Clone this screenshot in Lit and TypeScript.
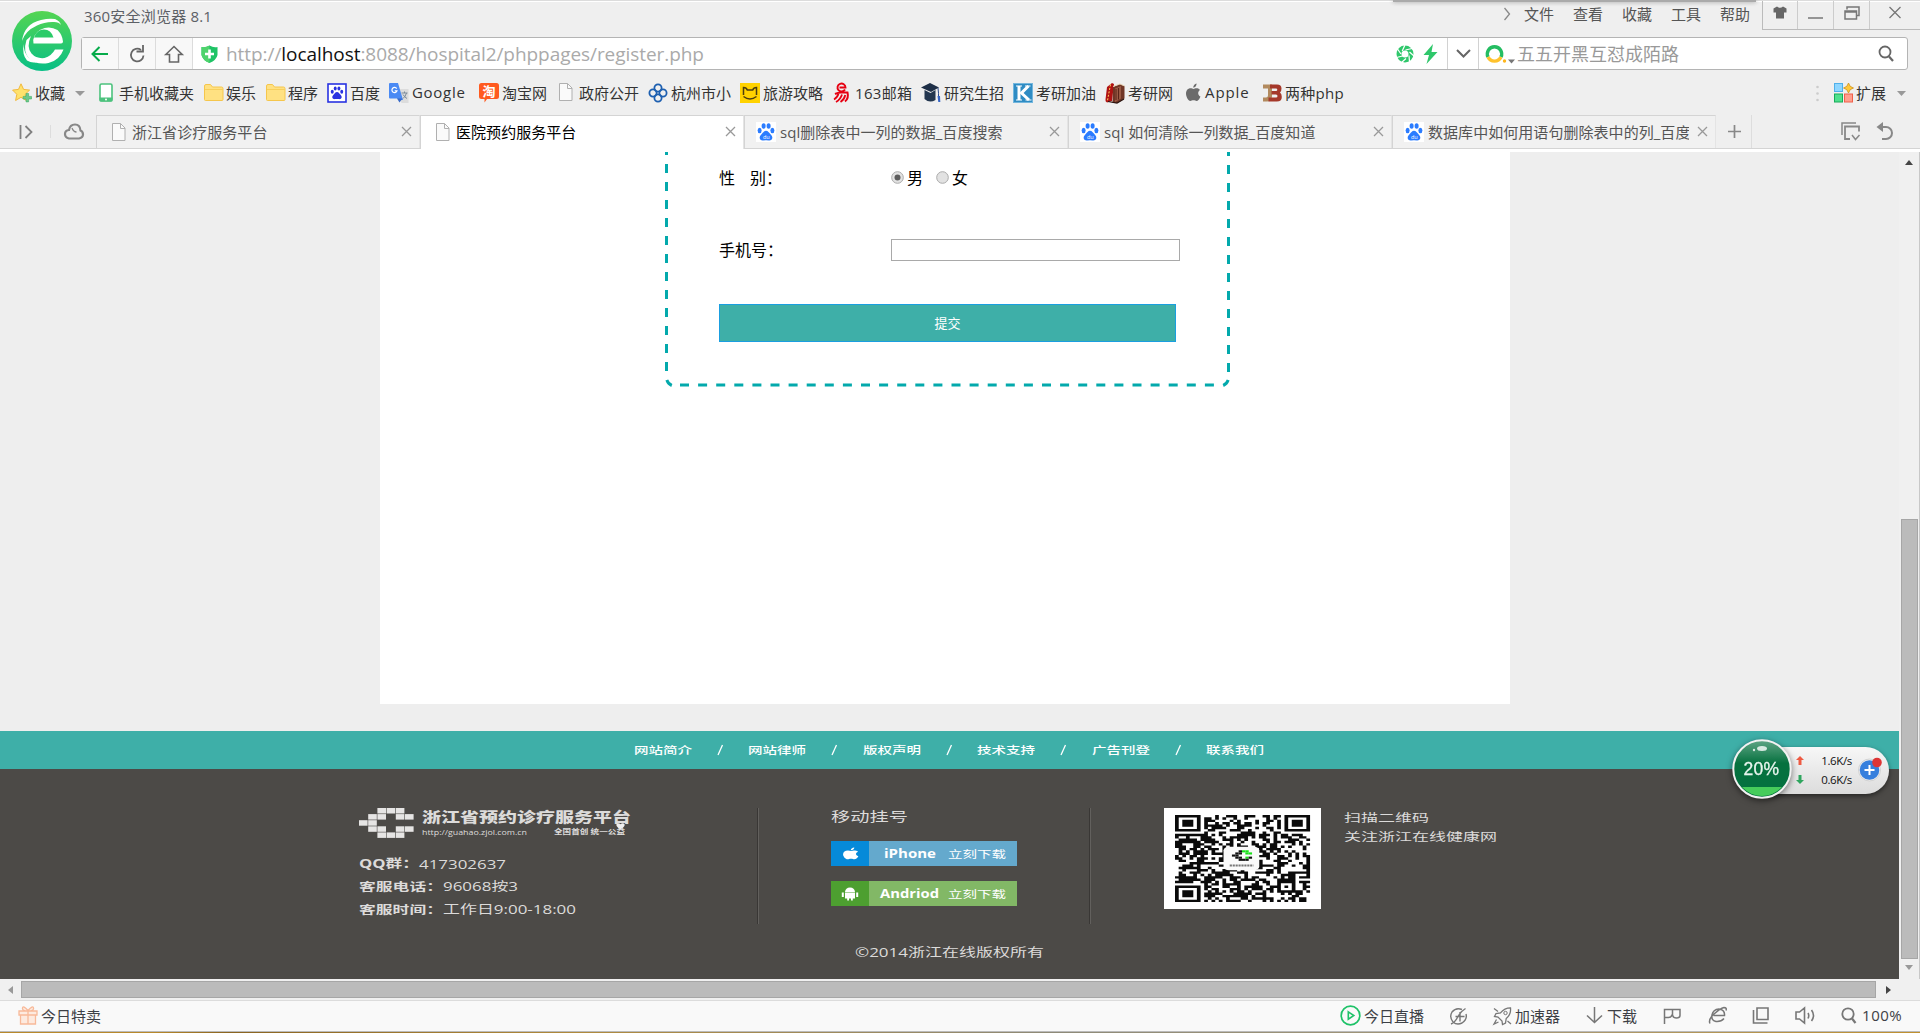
import { LitElement, html, svg, css, nothing } from "lit";
import { customElement } from "lit/decorators.js";

const page = svg`<path d="M1.5 .5h8l4.500 4.500v12.500h-12.500z" fill="#fafafa" stroke="#b0b0b0"/><path d="M9.500 .5v5h4.500" fill="none" stroke="#b0b0b0"/>`;
const folder = svg`<path d="M.5 3q0-1.500 1.500-1.500h4.500l2 2.500h9q1.500 0 1.500 1.500v11q0 1-1 1h-16.500q-1 0-1-1z" fill="#ffe182" stroke="#f5c64c"/><path d="M1 6.500h18" stroke="#f7cf5c"/>`;
const paw = (c: string) => svg`<g fill="${c}"><ellipse cx="3.600" cy="8.500" rx="2" ry="2.700"/><ellipse cx="7.600" cy="4" rx="2" ry="2.800"/><ellipse cx="12.600" cy="4" rx="2" ry="2.800"/><ellipse cx="16.400" cy="8.500" rx="2" ry="2.700"/><path d="M10 8.800c2 0 3 2 4.500 3.400c3.500 3.400 1.500 6.600-1.700 6.200q-2.800-.5-5.600 0c-3.200.4-5.200-2.800-1.700-6.200c1.500-1.400 2.500-3.400 4.500-3.400z"/></g>`;
const apple = (c: string) => svg`<path d="M12.200 5.200c-1 0-1.800.7-2.600.7s-1.800-.7-3-.7c-2.700 0-4.600 2.200-4.600 5.400c0 3.400 2.300 7.400 4.300 7.400c1.100 0 1.700-.7 3.200-.7s2 .7 3.100.7c1.700 0 3.300-3 3.800-4.600c-2.800-1.300-2.900-5.200-.3-6.500c-1-1.300-2.500-1.700-3.900-1.700z" fill="${c}"/><path d="M12.600.6c.1 2.300-1.500 4-3.300 4.100c-.2-2 1.300-3.900 3.300-4.100z" fill="${c}"/>`;

const icons: Record<string, unknown> = {
  star: svg`<path d="M9 .8l2.600 5.600 6 .7-4.500 4.200 1.300 6.200-5.400-3.200-5.400 3.200 1.200-6.200L.6 7.100l5.900-.7z" fill="#ffe26c" stroke="#f2b93c"/><path d="M14 10.500h2.600v2.900h2.900v2.600h-2.900v2.900h-2.600v-2.900h-2.900v-2.600h2.900z" fill="#6ec98b" stroke="#3fae66" stroke-width=".6"/>`,
  phone: svg`<rect x="1" y="1" width="12" height="17" rx="1.500" fill="#fff" stroke="#4cc27d" stroke-width="1.600"/><path d="M.5 14.500h13v3q0 1-1 1h-11q-1 0-1-1z" fill="#4cc27d"/><circle cx="7" cy="16.500" r="1" fill="#fff"/>`,
  folder,
  baidu: svg`<rect x="1" y="1" width="18" height="18" fill="#fff" stroke="#2932e1" stroke-width="1.600"/><g transform="translate(2.600 2.500) scale(.74)">${paw("#2932e1")}</g>`,
  google: svg`<path d="M9 6h10.500v14h-7z" fill="#dcdcdc"/><path d="M1 0h8l5 17h-4l-2-1.500h-7q-1 0-1-1v-13.500q0-1 1-1z" fill="#4a8af4"/><path d="M8 15.500h5.500l-3 4z" fill="#3a6bc8"/><path d="M7.700 5.600a2.600 2.600 0 1 0 .3 2.300h-2.300" fill="none" stroke="#fff" stroke-width="1.200"/><path d="M12.500 10h6M15.500 8.500v1.500M17.500 10q-1 3.500-3.500 5.500M14 11.500q1.500 2.500 4 4" fill="none" stroke="#7b8a99"/>`,
  tao: svg`<path d="M2.500 0h15q2.500 0 2.500 2.500v11q0 2.500-2.500 2.500h-9.500l-2.500 3.500v-3.500h-3q-2.500 0-2.500-2.500v-11q0-2.500 2.500-2.500z" fill="#ff5a1f"/><text x="3.500" y="13" font-size="13" font-weight="700" fill="#fff" font-family="Noto Sans CJK SC">淘</text>`,
  page,
  unicom: svg`<g fill="none" stroke="#1d5fb0" stroke-width="1.800"><circle cx="10" cy="5" r="3.600"/><circle cx="5" cy="10" r="3.600"/><circle cx="15" cy="10" r="3.600"/><circle cx="10" cy="15" r="3.600"/></g>`,
  trip: svg`<rect width="20" height="20" fill="#ffd200"/><path d="M3.500 12v-7.500q3 0 3.800 2.500h5.400q.8-2.500 3.800-2.500v7.500M3.500 13.500q6.500 5 13 0" fill="none" stroke="#4a3d10" stroke-width="1.500"/>`,
  mail: svg`<g fill="none" stroke="#e60012"><path d="M11 6.500a4 4 0 1 1 .5-2h-6" stroke-width="1.900"/><path d="M1 11q3-1.500 6-1.500h6.500q1.500 6-2.500 9" stroke-width="2"/><path d="M4.500 10.500q-1 4-4.500 6M8 11.500q-1.500 5-6 7.500M11.300 12q-1 4.500-4.800 7" stroke-width="1.800"/></g>`,
  cap: svg`<path d="M0 4.500l9-4.500 9 4.500-8 4.500z" fill="#1e2f47"/><path d="M3.500 7v9q5 4.500 11 1v-10l-5 3z" fill="#22364f"/><path d="M17 5q.8 6 .5 9" fill="none" stroke="#2b4a8a"/><path d="M16.500 13h2.500l.3 6h-2z" fill="#3564c4"/>`,
  kay: svg`<rect x=".5" y=".5" width="19" height="19" fill="#2f8cc4" stroke="#73b6dd"/><path d="M3 3h6M3 17h6M12 3h5.500M12.500 17h6" stroke="#fff" stroke-width="1.200"/><path d="M4.500 3h3v14h-3z" fill="#fff"/><path d="M15.500 3l-7 7 7.500 7" fill="none" stroke="#fff" stroke-width="3"/>`,
  book: svg`<path d="M2 4l5-4 2 1-2 17-5 1.500q-2-1-1.500-3z" fill="#b01212"/><path d="M8 4l7-3 4.500 2v12.500l-7 4.500h-5z" fill="#713626"/><path d="M10 5.500l6-2.500v12.500l-6 3.500z" fill="#9a5a44"/><path d="M11 6v11M13.500 5v11.500" stroke="#5a2418"/><path d="M5.500 1.500l-3 16" stroke="#ffcf5a" stroke-dasharray="2 1.500"/><path d="M8 3.500l7-2.500 4.500 2" fill="none" stroke="#e9d7b8"/><path d="M3 18.500l9 1.500 7-4" fill="none" stroke="#2b1510" stroke-width="1.200"/>`,
  apple: apple("#6b6b6b"),
  jb: svg`<path d="M1 1.500h9v12q0 5-5 5h-4v-4h3q2 0 2-2v-7h-5z" fill="#b28a5e"/><path d="M8 1.500h7q4.500 0 4.500 4 0 3-1.500 4 1.800 1 1.800 4.500 0 4.500-5 4.500h-8.300v-4h7.500q1.500 0 1.500-1.500t-1.500-1.500h-4.500v-3.500h4.500q1.300 0 1.300-1.300t-1.300-1.300h-6z" fill="#a5382a"/>`,
  pawtab: svg`<rect width="20" height="20" fill="#fff"/>${paw("#2b7cff")}<text x="7" y="16.500" font-size="5.500" fill="#fff" font-family="Open Sans">du</text>`,
};

const icon = (name: string, w = 20, h = 20, cls = "") =>
  html`<svg class="ic ${cls}" width="${w}" height="${h}" viewBox="0 0 ${w} ${h}">${icons[name]}</svg>`;
const draw = (w: number, h: number, body: unknown, cls = "") =>
  html`<svg class="ic ${cls}" width="${w}" height="${h}" viewBox="0 0 ${w} ${h}" fill="none">${body}</svg>`;
/** Horizontally stretched line of text, as the footer uses throughout. */
const wide = (text: string, w: number, size: number, h: number, cls = "") =>
  html`<svg class="wide ${cls}" width="${w}" height="${h}"><text x="0" y="${h / 2 + size * 0.37}" font-size="${size}" textLength="${w}" lengthAdjust="spacingAndGlyphs">${text}</text></svg>`;

// label, icon, icon width, total width up to the next entry, gap before the label, letter spacing
const bookmarks: [string, string, number, number, number, number][] = [
  ["收藏", "star", 20, 87, 3, 0],
  ["手机收藏夹", "phone", 14, 105, 6, 0],
  ["娱乐", "folder", 20, 62, 2, 0],
  ["程序", "folder", 20, 61, 2, 0],
  ["百度", "baidu", 20, 62, 3, 0],
  ["Google", "google", 20, 90, 3, 0.7],
  ["淘宝网", "tao", 20, 79, 3, 0],
  ["政府公开", "page", 15, 90, 6, 0],
  ["杭州市小", "unicom", 20, 92, 3, 0],
  ["旅游攻略", "trip", 20, 94, 3, 0],
  ["163邮箱", "mail", 16, 87, 5, 0.3],
  ["研究生招", "cap", 20, 92, 3, 0],
  ["考研加油", "kay", 20, 92, 3, 0],
  ["考研网", "book", 20, 79, 3, 0],
  ["Apple", "apple", 17, 78, 4, 0.9],
  ["两种php", "jb", 20, 90, 3, 0.3],
];

const tabs: [string, string, boolean][] = [
  ["浙江省诊疗服务平台", "page", false],
  ["医院预约服务平台", "page", true],
  ["sql删除表中一列的数据_百度搜索", "pawtab", false],
  ["sql 如何清除一列数据_百度知道", "pawtab", false],
  ["数据库中如何用语句删除表中的列_百度", "pawtab", false],
];

const logoCells = ["  ###", " ## ##", "##", " ## ##", "  ###"];
const cells = (sx: number, sy: number, gap: number, accent?: string) =>
  logoCells.flatMap((row, y) =>
    [...row].map((c, x) => (c === "#" ? svg`<rect x="${x * sx}" y="${y * sy}" width="${sx - gap}" height="${sy - gap}" fill="${accent && ((y < 2 && x > 2) || (y === 3 && x === 4)) ? accent : "inherit"}"/>` : nothing))
  );

function qrPath(): string {
  const n = 37;
  const ring = (x: number, y: number, cx: number, cy: number) => Math.max(Math.abs(x - cx), Math.abs(y - cy));
  let seed = 90417;
  let d = "";
  for (let y = 0; y < n; y++) {
    for (let x = 0; x < n; x++) {
      seed = (seed * 1103515245 + 12345) % 2147483648;
      let on = (seed >> 12) % 100 < 54;
      for (const [cx, cy] of [[3, 3], [33, 3], [3, 33]]) {
        const r = ring(x, y, cx, cy);
        if (r <= 4) on = r !== 4 && r !== 2;
      }
      const a = ring(x, y, 30, 30);
      if (a <= 2) on = a !== 1;
      if (on) d += `M${x} ${y}h1.02v1.02h-1.02z`;
    }
  }
  return d;
}

@customElement("app-root")
export class AppRoot extends LitElement {
  static styles = css`
    :host { display: flex; flex-direction: column; width: 1920px; height: 1033px; overflow: hidden; position: relative; background: #efefef; box-sizing: border-box; font-family: "Open Sans", "Noto Sans CJK SC", sans-serif; font-size: 15px; color: #333; }
    * { box-sizing: border-box; }
    .ic { display: block; flex: none; overflow: visible; }
    .wide { display: block; flex: none; overflow: visible; font-family: "Open Sans", "Noto Sans CJK SC", sans-serif; fill: #dcdbda; }
    .wide.nav { fill: #fff; font-weight: 500; }
    .wide.b { font-weight: 700; }
    .wide.h { font-weight: 900; }
    .wide.w { fill: #fff; }
    span { white-space: nowrap; }

    .head { flex: none; height: 115px; border-top: 1px solid #dcdcdc; box-shadow: inset 0 1px #fff; display: grid; grid-template-columns: 81px 1fr; grid-template-rows: 36px 33px 45px; }
    .logo { grid-row: 1 / 3; padding: 10px 0 0 12px; }
    .title { display: flex; justify-content: space-between; padding-left: 3px; height: 34px; }
    .title .name { line-height: 30px; color: #5c6066; letter-spacing: .2px; }
    .menu { display: flex; line-height: 27px; color: #555; }
    .menu span { margin-right: 19px; }
    .menu > .ic { margin: 6px 12px 0 0; }
    .menu .last { margin-right: 12px; }
    .winbtns { display: flex; height: 29px; border: 1px solid #bbb; border-top: 0; border-right: 0; }
    .winbtns div { display: flex; align-items: center; justify-content: center; width: 36px; border-left: 1px solid #ccc; padding-bottom: 5px; }
    .winbtns div:first-child { border: 0; width: 34px; }
    .winbtns div:last-child { width: 51px; }
    .shade { position: absolute; left: 1393px; top: 0; width: 363px; height: 2px; background: #aaa; box-shadow: 0 0 4px #888; }

    .bar { display: flex; width: 1827px; height: 33px; border: 1px solid #b4b4b4; border-radius: 3px; background: #fff; }
    .btn { display: flex; align-items: center; justify-content: center; width: 37px; border-right: 1px solid #dcdcdc; background: #f8f8f8; }
    .url { display: flex; align-items: center; flex: 1; padding-left: 8px; gap: 8px; font-size: 19px; color: #aaa; letter-spacing: -.06px; }
    .url b { color: #111; font-weight: 400; }
    .quick { display: flex; align-items: center; gap: 9px; width: 51px; }
    .drop { display: flex; align-items: center; justify-content: center; width: 32px; border-left: 1px solid #d2d2d2; border-right: 1px solid #d2d2d2; }
    .search { display: flex; align-items: center; width: 428px; padding: 0 13px 0 6px; font-size: 18px; color: #999; }
    .search span { flex: 1; padding: 0 0 1px 1px; }

    .marks { grid-column: 1 / 3; display: flex; align-items: center; padding: 0 0 0 12px; height: 46px; }
    .mark { display: flex; align-items: center; color: #333; flex: none; }
    .mark span, .ext span { padding-bottom: 2px; }
    .mark .tri { margin-left: 10px; }
    .ext { display: flex; align-items: center; margin-left: auto; width: 104px; }
    .ext span { margin: 0 11px 0 2px; }

    .tabs { flex: none; height: 34px; display: flex; border-bottom: 1px solid #d4d4d4; }
    .side { display: flex; align-items: center; width: 96px; padding-left: 19px; }
    .side i { width: 1px; height: 13px; background: #ddd; margin: 0 13px 0 16px; }
    .tab { display: flex; align-items: center; width: 324px; height: 33px; border: 1px solid #d4d4d4; border-bottom: 0; border-right: 1px solid #e4e4e4; background: #f1f1f1; padding: 0 7px 1px 14px; color: #555; }
    .tab.p { padding-left: 11px; }
    .tab.on { background: #fff; color: #000; height: 34px; padding-bottom: 2px; }
    .tab span { flex: 1; overflow: hidden; margin-left: 4px; letter-spacing: .05px; }
    .tab.page span { margin-left: 6px; }
    .tab .x { margin-left: 8px; }
    .newtab { display: flex; align-items: center; justify-content: center; width: 36px; border-right: 1px solid #ddd; padding-left: 2px; }
    .tools { display: flex; align-items: center; margin-left: auto; gap: 16px; padding-right: 26px; }

    .view { flex: none; height: 830px; border-top: 3px solid #fff; display: flex; }
    .doc { width: 1899px; display: flex; flex-direction: column; background: #eee; }
    .panel { width: 1130px; height: 552px; margin-left: 380px; background: #fff; padding-left: 285px; }
    .form { position: relative; width: 565px; height: 235px; padding: 14px 0 0 54px; font-size: 16px; color: #000; line-height: 24px; }
    .frame { position: absolute; inset: 0; }
    .row { display: flex; align-items: center; height: 24px; }
    .row .lab { width: 172px; white-space: pre; }
    .row.two { margin-top: 48px; }
    .gap { width: 15px; display: inline-block; }
    .radios { display: flex; align-items: center; gap: 3px; }
    .radios .ic { margin-top: -2px; }
    .radios .ic + span { margin-right: 10px; }
    .field { width: 289px; height: 22px; border: 1px solid #a9a9a9; background: #fff; }
    .submit { display: flex; align-items: center; justify-content: center; width: 457px; height: 38px; margin-top: 42px; padding-bottom: 1px; border: 1px solid #1a9fe0; background: #3eafa8; color: #fff; font-size: 13px; }
    .fnav { margin-top: 27px; height: 38px; background: #3eafa8; display: flex; align-items: center; padding: 0 0 1px 634px; }
    .fnav .s { margin: 0 25px; }
    .foot { height: 210px; background: #4c4a47; }
    .cols { display: flex; height: 155px; padding: 39px 0 0 359px; }
    .c1 { width: 399px; border-right: 1px solid #393735; box-shadow: 1px 0 #62605d; height: 116px; }
    .brand { display: flex; gap: 8px; height: 45px; }
    .brand .t { display: flex; flex-direction: column; }
    .sub { display: flex; gap: 27px; align-items: center; }
    .slogan { display: flex; align-items: flex-start; }
    .heart { margin: -3px 0 0 -9px; }
    .lines { display: flex; flex-direction: column; }
    .ln { display: flex; height: 22.700px; align-items: center; }
    .c2 { width: 332px; padding-left: 73px; border-right: 1px solid #393735; box-shadow: 1px 0 #62605d; height: 116px; }
    .sp { height: 16px; }
    .dl { display: flex; width: 186px; height: 25px; align-items: center; background: #64a9cd; margin-bottom: 15px; }
    .dl .sq { width: 38px; height: 25px; display: flex; align-items: center; justify-content: center; background: #068ad9; }
    .dl.g { background: #82b866; }
    .dl.g .sq { background: #4d9f30; }
    .dl .n { width: 79px; display: flex; justify-content: flex-end; padding-right: 12px; }
    .dl.g .n { padding-right: 9px; }
    .qr { width: 157px; height: 101px; background: #fff; padding: 7px 11px; margin-left: 74px; flex: none; }
    .c3 { padding: 0 0 0 23px; }
    .copy { display: flex; padding: 19px 0 0 855px; }

    .vbar { width: 21px; background: #f0f0f0; border-right: 1px solid #c8c8c8; display: flex; flex-direction: column; align-items: center; height: 827px; padding-top: 8px; }
    .vthumb { width: 17px; height: 440px; margin: 354px 0 6px; background: #bbb; border: 1px solid #a6a6a6; }
    .hbar { flex: none; height: 21px; display: flex; align-items: center; background: #f0f0f0; padding-left: 8px; }
    .hthumb { width: 1855px; height: 17px; margin: 0 10px 0 8px; background: #bbb; border: 1px solid #a6a6a6; }
    .status { flex: none; height: 31px; border-top: 1px solid #dcdcdc; background: #f9f9f9; display: flex; align-items: center; padding: 0 0 1px 18px; color: #3d4045; }
    .status .gift { margin-right: 3px; }
    .status span { display: block; padding-bottom: 1px; }
    .status .zoom { letter-spacing: .5px; }
    .right { display: flex; align-items: center; margin-left: 1239px; }
    .edge { flex: none; height: 2px; border-top: 1px solid #bbb; background: linear-gradient(90deg, #b8892b 0 8%, #8a6420 12%, #b08a3c 30%, #8e8a78 55%, #a89a78 80%, #c0902e 100%); }

    .speed { position: absolute; left: 1732px; top: 739px; width: 160px; height: 60px; }
    .pill { position: absolute; left: 29px; top: 8px; width: 128px; height: 47px; border-radius: 0 24px 24px 0; background: linear-gradient(#f7f7f7, #dcdcdc); box-shadow: 0 2px 5px rgba(0,0,0,.5); display: flex; align-items: center; padding: 0 0 2px 35px; color: #111; }
    .pill > .ic { margin: -2px 0 0 1px; }
    .rates { display: flex; flex-direction: column; width: 60px; gap: 2px; }
    .rate { display: flex; justify-content: space-between; align-items: center; height: 17px; padding-right: 4px; font-family: "Open Sans", sans-serif; font-size: 11.500px; letter-spacing: -.35px; }
    .ball { position: relative; filter: drop-shadow(0 2px 3px rgba(0,0,0,.5)); }
  `;

  private tri = (d: string, w: number, h: number, c: string) => draw(w, h, svg`<path d="${d}" fill="${c}"/>`, "tri");

  private header() {
    return html`
      <div class="head">
        <div class="logo">${draw(60, 60, svg`
          <defs><linearGradient id="lg" x1="0" y1="0" x2="0" y2="1"><stop offset="0" stop-color="#54d552"/><stop offset="1" stop-color="#08bf86"/></linearGradient></defs>
          <circle cx="30" cy="30" r="30" fill="url(#lg)"/>
          <path d="M46.500 32.500H21.500a15.500 13.500 0 0 1 24-13.500q5 5 5.500 11.500a2 2 0 0 1-2 2z" fill="#fff"/>
          <path d="M22 26.500q3-8 10-8t9.500 8z" fill="#2bcb68"/>
          <path d="M10 30q2-17 19-21q8-2 14-1q5 2 6 6q-2-3-7-3q-9-.5-17 3.500Q13 20 10 30z" fill="#fff"/>
          <path d="M43 38.500h8.500q-4 11-15 13.500q-12 2-19-4q-7-7-3-19l4.500-4q-5 11 .5 17.500q5 5.500 13 4.500q7-2 10.500-8.500z" fill="#fff"/>
          <path d="M11.500 33q-1.500 11 3.500 16.500q5 3 10 1.500q-13-3.500-13.500-18z" fill="#fff"/>`)}</div>
        <div class="title">
          <span class="name">360安全浏览器 8.1</span>
          <div class="menu">
            ${draw(9, 14, svg`<path d="M1.500 1l5 6-5 6" stroke="#888" stroke-width="1.300"/>`)}
            <span>文件</span><span>查看</span><span>收藏</span><span>工具</span><span class="last">帮助</span>
            <div class="winbtns">
              <div>${draw(14, 13, svg`<path d="M4 .5q3 2.500 6 0l3.500 2v4h-2.500v6h-8v-6h-2.500v-4z" fill="#666"/>`)}</div>
              <div>${draw(15, 12, svg`<path d="M0 11h15" stroke="#777" stroke-width="1.500"/>`)}</div>
              <div>${draw(16, 14, svg`<path d="M3 3.500v-2.500h12v8.500h-2" stroke="#777" stroke-width="1.500"/><path d="M1 5h11.500v8h-11.500zM1 6h11.500" stroke="#777" stroke-width="1.500"/>`)}</div>
              <div>${draw(12, 13, svg`<path d="M.5 1l11 11M11.500 1l-11 11" stroke="#777" stroke-width="1.300"/>`)}</div>
            </div>
          </div>
        </div>
        <div class="bar">
          <div class="btn">${draw(18, 16, svg`<path d="M17 8h-15.500M8.500 1l-7 7 7 7" stroke="#06ab4a" stroke-width="2"/>`)}</div>
          <div class="btn">${draw(17, 18, svg`<path d="M14.500 10.500a6.300 6.300 0 1 1-2.500-5.500" stroke="#666" stroke-width="1.800"/><path d="M14 0v6.500h-6.500" stroke="#666" stroke-width="1.800"/>`)}</div>
          <div class="btn">${draw(18, 18, svg`<path d="M.8 9.500l8.200-8 8.200 8h-3.700v7.500h-9v-7.500z" stroke="#666" stroke-width="1.600"/>`)}</div>
          <div class="url">
            ${draw(17, 18, svg`<path d="M.5 2q4 1 8-1.500q4 2.500 8 1.500v8q-1 5-8 8q-7-3-8-8z" fill="#1fc366"/><path d="M.5 2q4 1 8-1.500v17.500q-7-3-8-8z" fill="#4fd36c"/><path d="M8.500 4.500v9M4 9h9" stroke="#fff" stroke-width="2.600"/>`)}
            <span>http://<b>localhost</b>:8088/hospital2/phppages/register.php</span>
          </div>
          <div class="quick">
            ${draw(18, 18, svg`<circle cx="9" cy="9" r="6" stroke="#2fc76b" stroke-width="5"/><path d="M9 0l-2.800 6M16 3.500l-6.500 1.500M18 11l-4.500-4M13.500 17l-.5-6.500M5.500 17.500l4.500-4M.5 12.500l6-1.500M1.500 4l3.500 5" stroke="#fff" stroke-width="1.200"/>`)}
            ${draw(15, 20, svg`<path d="M10 0l-9.500 11h5.500l-2.500 9 11-12h-6z" fill="#2fc76b"/>`)}
          </div>
          <div class="drop">${draw(15, 9, svg`<path d="M1 1l6.500 6.500 6.500-6.500" stroke="#666" stroke-width="2"/>`)}</div>
          <div class="search">
            ${draw(31, 20, svg`<path d="M3 13a7.200 7.200 0 1 1 13 0" stroke="#24bd62" stroke-width="3.400"/><path d="M3 13a7.200 7.200 0 0 0 13 0" stroke="#ffc22c" stroke-width="3.400"/><circle cx="19.500" cy="17" r="1.700" fill="#ffb61c"/><path d="M23 15.500h7l-3.500 4z" fill="#777"/>`)}
            <span>五五开黑互怼成陌路</span>
            ${draw(16, 17, svg`<circle cx="7" cy="7" r="5.500" stroke="#666" stroke-width="1.800"/><path d="M11 11.500l4 4.500" stroke="#666" stroke-width="2.200"/>`)}
          </div>
        </div>
        <div class="marks">
          ${bookmarks.map(([t, ic, iw, w, g, ls], i) => html`
            <div class="mark" style="width:${w}px">${icon(ic, iw)}<span style="margin-left:${g}px;letter-spacing:${ls}px">${t}</span>${i === 0 ? this.tri("M0 0h10l-5 5z", 10, 5, "#999") : nothing}</div>`)}
          <div class="ext">
            ${draw(18, 18, svg`<g fill="#ccc"><circle cx="1.500" cy="3" r="1.300"/><circle cx="1.500" cy="9.500" r="1.300"/><circle cx="1.500" cy="16" r="1.300"/></g>`)}
            ${draw(20, 20, svg`<rect x=".5" y=".5" width="8" height="8" fill="#8ed6ff" stroke="#4fb0ea"/><path d="M14.500 0l1.700 3.300 3.300 1.700-3.300 1.700-1.700 3.300-1.700-3.300-3.300-1.700 3.300-1.700z" fill="#ffc83a" stroke="#c98a10" stroke-width=".7"/><rect x=".5" y="11" width="8" height="8" fill="#4fe08d" stroke="#16ab59"/><rect x="10.500" y="11" width="8" height="8" fill="#ff9f8e" stroke="#f0604a"/>`)}
            <span>扩展</span>${this.tri("M0 0h9l-4.500 5z", 10, 5, "#999")}
          </div>
        </div>
      </div>
      <div class="tabs">
        <div class="side">
          ${draw(15, 16, svg`<path d="M1.500 1v14M6.500 2l6 6-6 6" stroke="#808080" stroke-width="1.800"/>`)}<i></i>
          ${draw(20, 17, svg`<path d="M5 15.500q-4-1-4-4.500t4-4q1-5.500 6-5.500t5.500 6q2.500 1 2.500 4t-4 4z" stroke="#888" stroke-width="2.200"/><path d="M8 5q1.500 4 4.500 4" stroke="#888" stroke-width="1.300"/>`)}
        </div>
        ${tabs.map(([t, ic, on]) => html`
          <div class="tab ${on ? "on" : ""} ${ic === "page" ? "page" : "p"}">${icon(ic, ic === "page" ? 15 : 20, ic === "page" ? 18 : 20)}<span>${t}</span>
            ${draw(11, 11, svg`<path d="M1 1l9 9M10 1l-9 9" stroke="#999" stroke-width="1.300"/>`, "x")}</div>`)}
        <div class="newtab">${draw(13, 13, svg`<path d="M6.500 0v13M0 6.500h13" stroke="#888" stroke-width="1.700"/>`)}</div>
        <div class="tools">
          ${draw(19, 19, svg`<path d="M1 13v-12h14" stroke="#888" stroke-width="1.500"/><path d="M9 17h-5v-12.500h14v5" stroke="#888" stroke-width="1.800"/><path d="M11 13l3.500 4.500 4-4.500" stroke="#888" stroke-width="1.500"/>`)}
          ${draw(18, 19, svg`<path d="M4 5h6a6 6 0 0 1 0 12h-4" stroke="#888" stroke-width="2"/><path d="M7 0v10l-6.500-5z" fill="#888"/>`)}
        </div>
      </div>`;
  }

  private form() {
    const radio = (on: boolean) => draw(13, 13, svg`<circle cx="6.500" cy="6.500" r="5.800" fill="#e2e2e2" stroke="#aaa"/>${on ? svg`<circle cx="6.500" cy="6.500" r="3" fill="#5c5c5c"/>` : nothing}`);
    return html`
      <div class="form">
        <svg class="frame" width="565" height="235" fill="none" stroke="#03a9ac" stroke-width="3">
          <path d="M1.500 -6v228" stroke-dasharray="9 9"/>
          <path d="M563.500 -5v228" stroke-dasharray="9 9"/>
          <path d="M15 233h536" stroke-dasharray="9 9.100"/>
          <path d="M1.800 228q1.500 4 5 5.500M563.200 228q-1.500 4-5 5.500"/>
        </svg>
        <div class="row"><span class="lab">性<span class="gap"></span>别：</span>
          <div class="radios">${radio(true)}<span>男</span>${radio(false)}<span>女</span></div></div>
        <div class="row two"><span class="lab">手机号：</span><div class="field"></div></div>
        <div class="submit">提交</div>
      </div>`;
  }

  private footer() {
    const links = ["网站简介", "网站律师", "版权声明", "技术支持", "广告刊登", "联系我们"];
    return html`
      <div class="fnav">${links.map((l, i) => html`${i ? draw(6.4, 10, svg`<path d="M5.500 0l-4.500 10" stroke="#fff" stroke-width="1.300"/>`, "s") : nothing}${wide(l, 58, 10.5, 16, "nav")}`)}</div>
      <div class="foot">
        <div class="cols">
          <div class="c1">
            <div class="brand">
              <svg class="ic" width="55" height="31" fill="#e6e5e4">${cells(9.2, 6.1, 0.6)}</svg>
              <div class="t">${wide("浙江省预约诊疗服务平台", 209, 14, 18, "h")}
                <div class="sub">${wide("http://guahao.zjol.com.cn", 105, 7.5, 8)}
                  <div class="slogan">${wide("全国首创 统一公益", 71, 6.5, 12, "b")}${draw(9, 7, svg`<path d="M4.500 6.500q-6-4-3.500-6q2-1 3.500.8q1.500-1.800 3.500-.8q2.500 2-3.500 6z" fill="#eee"/>`, "heart")}</div></div></div>
            </div>
            <div class="lines">
              <div class="ln">${wide("QQ群：", 60, 12, 16, "b")}${wide("417302637", 87, 12.5, 16)}</div>
              <div class="ln">${wide("客服电话：", 84, 11, 16, "b")}${wide("96068按3", 75, 12, 16)}</div>
              <div class="ln">${wide("客服时间：", 84, 11, 16, "b")}${wide("工作日9:00-18:00", 133, 12, 16)}</div>
            </div>
          </div>
          <div class="c2">
            ${wide("移动挂号", 77, 13, 17)}
            <div class="sp"></div>
            <div class="dl"><div class="sq"><svg class="ic" width="17" height="13" viewBox="1 0 16 19" preserveAspectRatio="none">${apple("#fff")}</svg></div>
              <div class="n">${wide("iPhone", 52, 11.5, 16, "b w")}</div>${wide("立刻下载", 58, 10.5, 16, "w")}</div>
            <div class="dl g"><div class="sq">${draw(18, 14, svg`<path d="M4 5q.5-4.500 5-4.500t5 4.500zM4 5.500h10v6h-2.200v2h-1.800v-2h-2v2h-1.800v-2h-2.200zM.8 5.500h2v4.500h-2zM15.200 5.500h2v4.500h-2z" fill="#fff"/>`)}</div>
              <div class="n">${wide("Andriod", 59, 11.5, 16, "b w")}</div>${wide("立刻下载", 58, 10.5, 16, "w")}</div>
          </div>
          <div class="qr"><svg class="ic" width="135" height="87" viewBox="0 0 37 37" preserveAspectRatio="none">
            <path d="${qrPath()}" fill="#0a0a0a"/><rect x="13.300" y="13.500" width="9.800" height="10" rx="1.500" fill="#fafafa"/>
            <g transform="translate(15.600 15)" fill="#111">${cells(0.92, 0.9, 0, "#19e019")}</g>
            <path d="M15 21.500h6.500" stroke="#777" stroke-width=".8" stroke-dasharray=".6 .2"/></svg></div>
          <div class="c3">${wide("扫描二维码", 85, 11.2, 19)}${wide("关注浙江在线健康网", 153, 11.2, 19)}</div>
        </div>
        <div class="copy">${wide("©2014浙江在线版权所有", 189, 12, 20)}</div>
      </div>`;
  }

  private status() {
    const s = "#777";
    const at = (gap: number, body: unknown) => html`<div style="margin-left:${gap}px">${body}</div>`;
    return html`
      <div class="status">
        ${draw(20, 19, svg`<path d="M1 5h18v4h-18zM2.500 9h15v9h-15zM10 5v13M10 5q-6 0-5.500-3t5.500 2.500q5-5.500 5.500-2.500t-5.500 3" fill="#fdeadf" stroke="#f8b999" stroke-width="1.300"/>`, "gift")}
        <span>今日特卖</span>
        <div class="right">
          ${draw(21, 21, svg`<circle cx="10.500" cy="10.500" r="9.300" stroke="#1fc268" stroke-width="1.700"/><path d="M8.300 6.800l5.500 3.700-5.500 3.700z" stroke="#1fc268" stroke-width="1.600"/>`)}
          ${at(3, html`<span>今日直播</span>`)}
          ${at(26, draw(18, 18, svg`<path d="M12 2.500q-6-2.500-10 2.500q-3 5 1 10q4 3.500 9 1q5.500-3.500 4-9M1 17q4-1.500 7-7.500q2.500-5 7.500-8M5.500 9.500h9M10 5v9.500" stroke="${s}" stroke-width="1.400"/>`))}
          ${at(25, draw(19, 18, svg`<path d="M17.500.8q-6 0-10 5l-4.500.7-1.500 3 3.500.5 4 4 .5 3.500 3-1.500.7-4.500q5-4 4.300-10.700zM3.500 12.500l-2.500 4.500 4.500-2M1 1.500l4 3M14.500 14l3.500 3" stroke="${s}" stroke-width="1.300"/><circle cx="12.500" cy="6" r="1.700" stroke="${s}"/>`))}
          ${at(3, html`<span>加速器</span>`)}
          ${at(26, draw(17, 17, svg`<path d="M8.500 0v15M1 8.500l7.500 7 7.500-7" stroke="${s}" stroke-width="1.500"/>`))}
          ${at(4, html`<span>下载</span>`)}
          ${at(26, draw(18, 16, svg`<path d="M1.500 16v-14.500h15.500v6q0 2.500-3.500 2.500t-4-3v-5.500M1.500 9.500h4q3 0 3.500-3" stroke="${s}" stroke-width="1.500"/>`))}
          ${at(27, draw(19, 19, svg`<path d="M5.500 9.500h11q.5-6-5.500-6.500q-6 .5-7 6t4 6.500q5 .5 8-3M2 17.500q-2-4 4-9.500t10-6.500q3 0 2 3" stroke="${s}" stroke-width="1.500"/>`))}
          ${at(25, draw(17, 17, svg`<path d="M5 1h11v11.500h-11zM1.500 3v13h14" stroke="${s}" stroke-width="1.600"/>`))}
          ${at(26, draw(21, 17, svg`<path d="M1 5h3.500l5-4v15l-5-4h-3.500zM13 6q1.500 2.500 0 5.500M16.500 3q4 5.500 0 11" stroke="${s}" stroke-width="1.600"/>`))}
          ${at(25, draw(16, 17, svg`<circle cx="7" cy="7" r="5.700" stroke="${s}" stroke-width="1.800"/><path d="M11 11.500l3.500 4.500" stroke="${s}" stroke-width="2.200"/>`))}
          ${at(5, html`<span class="zoom">100%</span>`)}
        </div>
      </div>
      <div class="edge"></div>`;
  }

  private speed() {
    const arrow = (up: boolean, c: string) => draw(8, 9, svg`<path d="${up ? "M4 0l4 4h-2.500v5h-3v-5h-2.500z" : "M4 9l4-4h-2.500v-5h-3v5h-2.500z"}" fill="${c}"/>`);
    return html`
      <div class="speed">
        <div class="pill">
          <div class="rates">
            <div class="rate">${arrow(true, "#ee5a42")}<span>1.6K/s</span></div>
            <div class="rate">${arrow(false, "#2ea55e")}<span>0.6K/s</span></div>
          </div>
          ${draw(25, 26, svg`<circle cx="12.500" cy="14" r="11" fill="#eee" stroke="#ccc" stroke-width=".8"/><circle cx="12.500" cy="14" r="9.800" fill="#367fdd"/><path d="M12.500 9v10M7.500 14h10" stroke="#fff" stroke-width="2"/><circle cx="20" cy="6.500" r="4.800" fill="#dd3535"/>`)}
        </div>
        <svg class="ball" width="60" height="60">
          <defs><linearGradient id="bg" x1="0" y1="0" x2="0" y2="1"><stop offset="0" stop-color="#5fa585"/><stop offset=".4" stop-color="#06713f"/><stop offset="1" stop-color="#03713f"/></linearGradient>
          <clipPath id="bc"><circle cx="30" cy="30" r="27"/></clipPath></defs>
          <circle cx="30" cy="30" r="28.700" fill="url(#bg)" stroke="#f2f2f2" stroke-width="2"/>
          <rect x="0" y="48" width="60" height="12" fill="#46cc5b" clip-path="url(#bc)"/>
          <ellipse cx="30" cy="9.500" rx="5" ry="2.500" fill="#fff" opacity=".8"/><circle cx="22" cy="11" r="1.200" fill="#fff" opacity=".8"/>
          <text x="29.500" y="35.500" text-anchor="middle" font-size="17.500" letter-spacing=".3" fill="#e8f5ee" stroke="#e8f5ee" stroke-width=".3" font-family="Liberation Sans, sans-serif">20%</text>
        </svg>
      </div>`;
  }

  render() {
    return html`
      ${this.header()}
      <div class="view">
        <div class="doc"><div class="panel">${this.form()}</div>${this.footer()}</div>
        <div class="vbar">${this.tri("M0 5l4-5 4 5z", 8, 5, "#444")}<div class="vthumb"></div>${this.tri("M0 0h8l-4 5z", 8, 5, "#999")}</div>
      </div>
      <div class="hbar">${this.tri("M5 0v8l-5-4z", 5, 8, "#999")}<div class="hthumb"></div>${this.tri("M0 0v8l5-4z", 5, 8, "#444")}</div>
      ${this.status()}${this.speed()}
      <div class="shade"></div>`;
  }
}
